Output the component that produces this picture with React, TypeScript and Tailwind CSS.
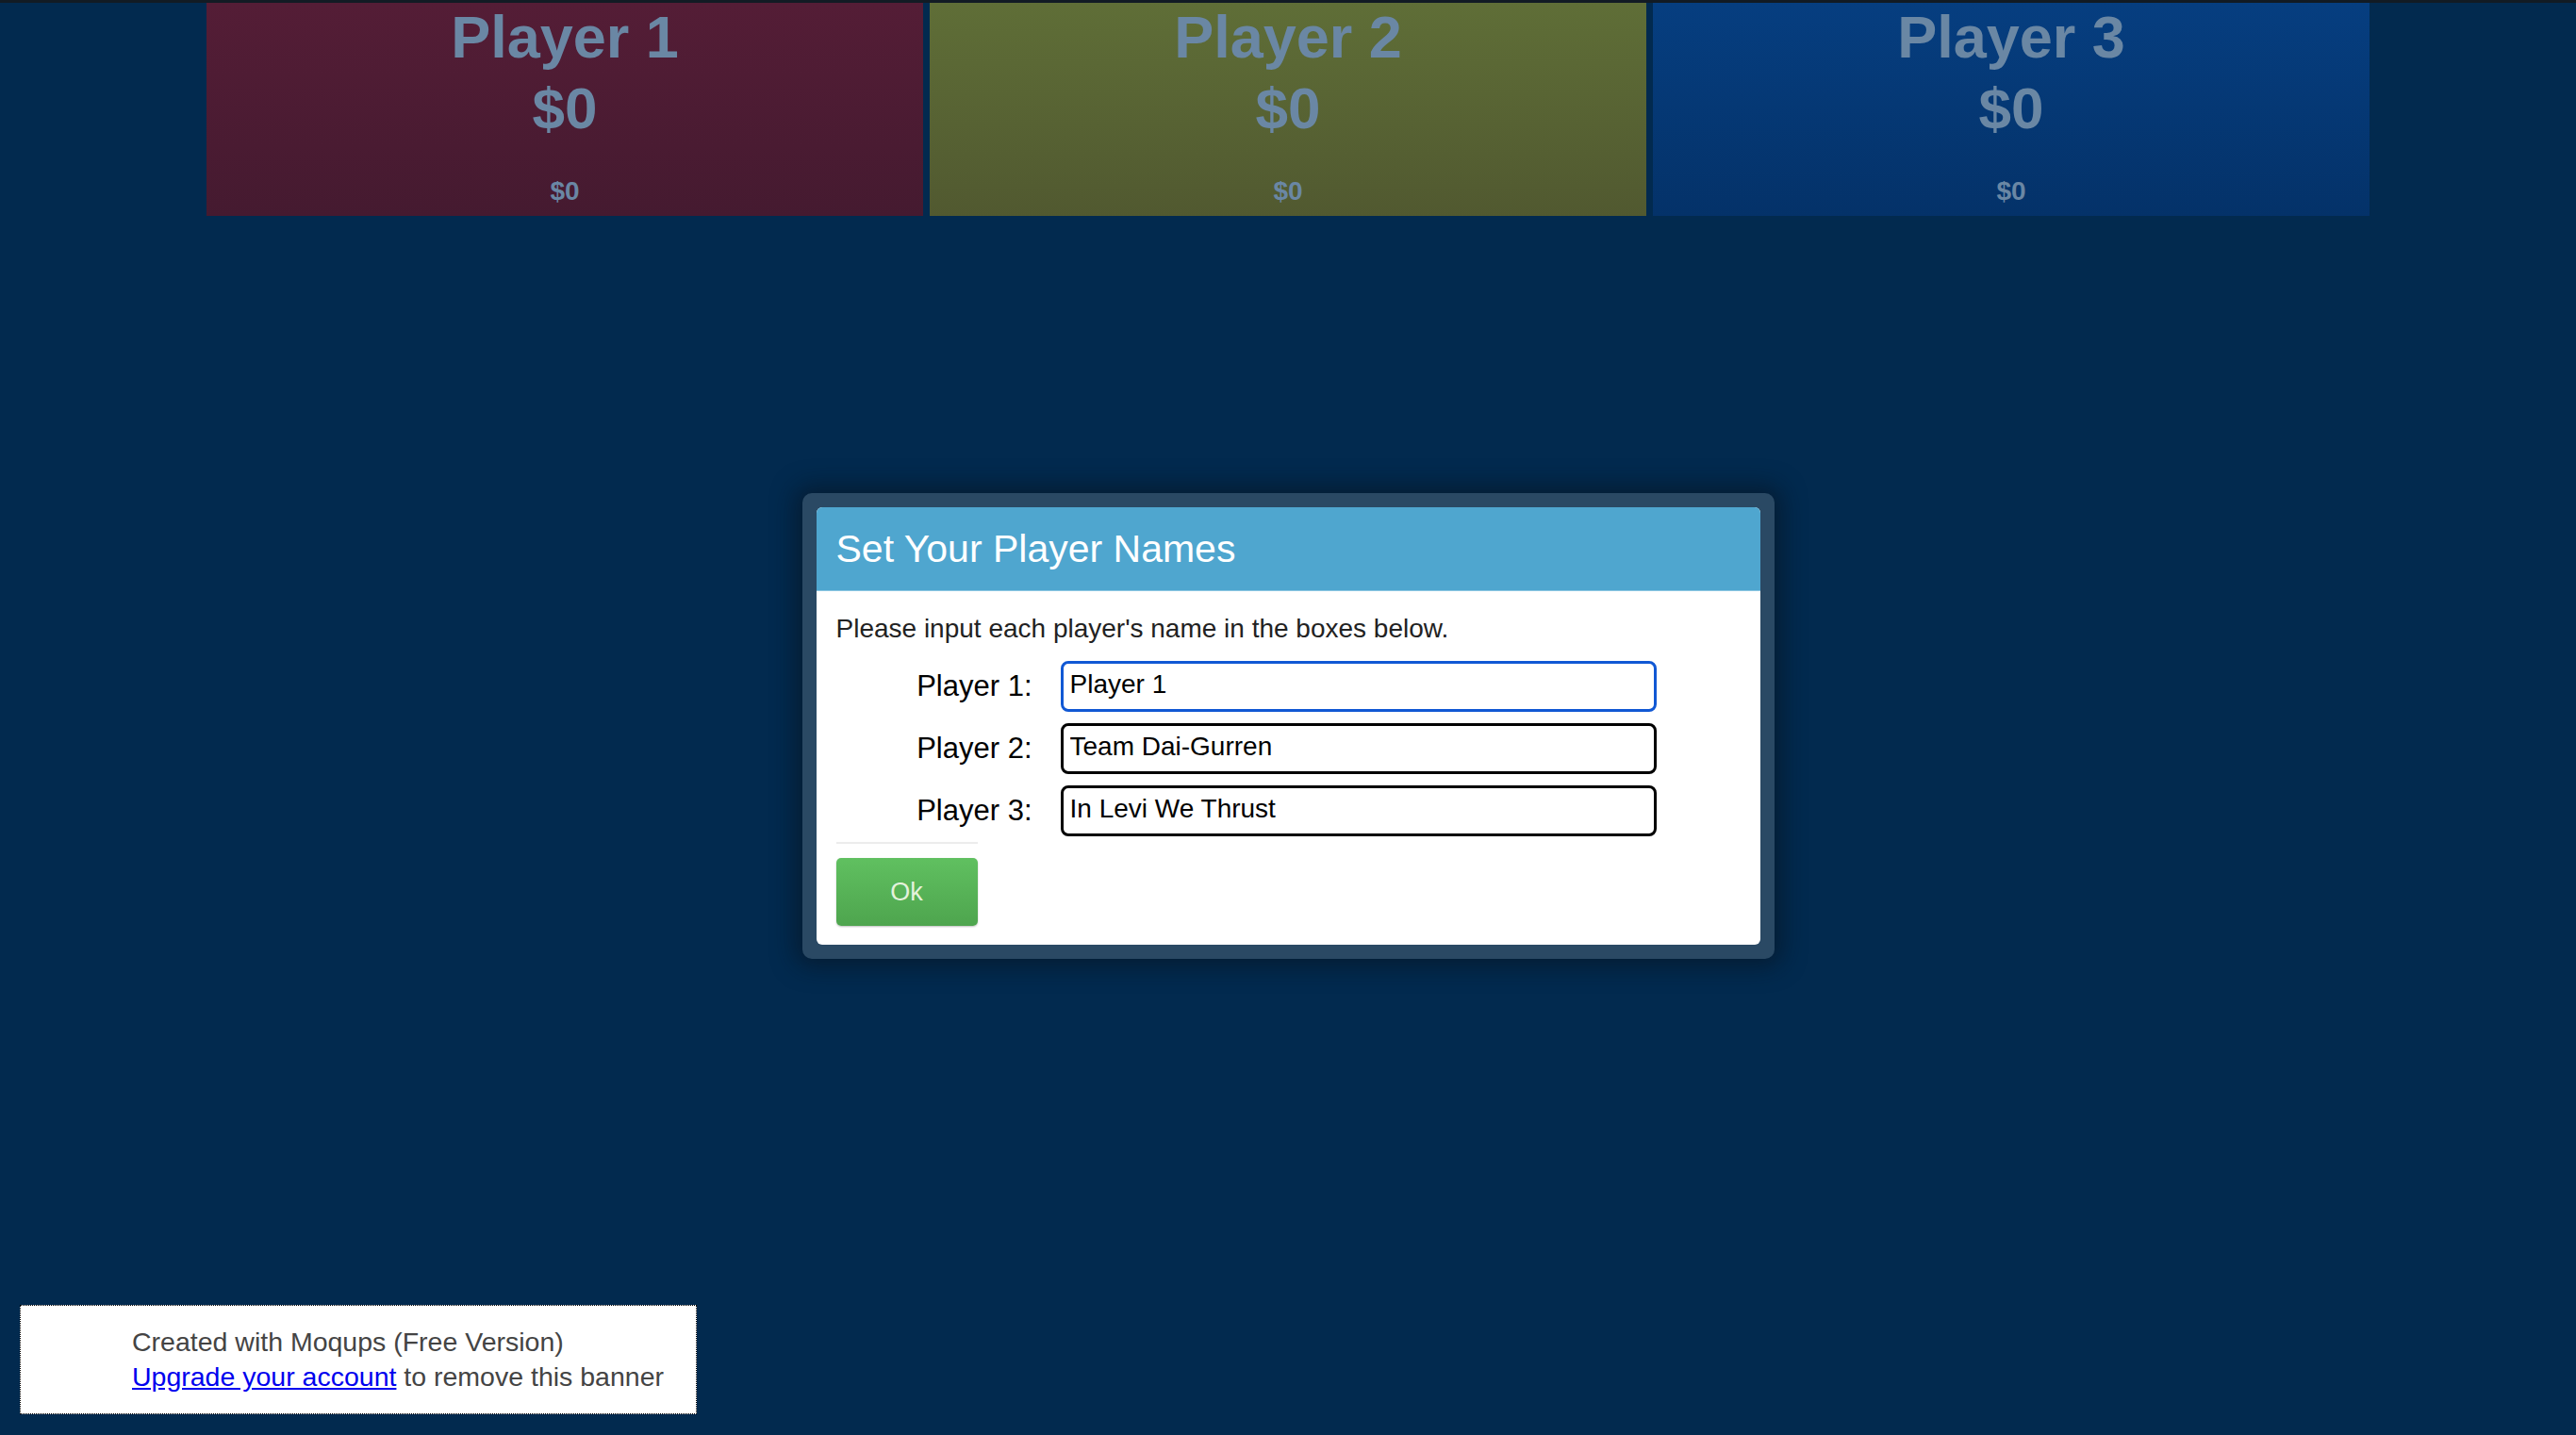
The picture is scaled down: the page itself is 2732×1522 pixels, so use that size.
import React from "react"

const players = [
  { name: "Player 1", bg: "bg-gradient-to-b from-[#541d36] to-[#451a30]" },
  { name: "Player 2", bg: "bg-gradient-to-b from-[#5f6e37] to-[#515930]" },
  { name: "Player 3", bg: "bg-gradient-to-b from-[#063e80] to-[#043269]" },
]

const names = [
  { label: "Player 1:", value: "Player 1", focus: true },
  { label: "Player 2:", value: "Team Dai-Gurren", focus: false },
  { label: "Player 3:", value: "In Levi We Thrust", focus: false },
]

const ScoreCard = ({ name, bg }: { name: string; bg: string }) => {
  return <div className={`w-[760px] h-[226px] flex flex-col items-center ${bg} text-[#6a87a4] font-bold`}>
    <div className="text-[63px] leading-[72px]">{name}</div>
    <div className="mt-[2px] text-[62px] leading-[75px]">$0</div>
    <div className="mt-[35px] text-[28px] leading-[32px]">$0</div>
  </div>
}

export default function App() {
  return <div className="min-h-[1522px] bg-[#022a4f] font-['Liberation_Sans',Arial,sans-serif]">
    <div className="h-[3px] bg-[#121b24]"></div>
    <div className="flex justify-center gap-[7px]">
      {players.map(p => <ScoreCard key={p.name} name={p.name} bg={p.bg} />)}
    </div>

    {/* name dialog */}
    <div className="mx-auto mt-[294px] w-[1031px] p-[15px] rounded-[10px] bg-[#2a4964] shadow-[0_0_24px_8px_rgba(8,18,30,0.55)]">
      <div className="bg-white rounded-[6px] overflow-hidden">
        <div className="h-[89px] bg-[#4fa6cf] border-b border-[#8cc6e2] flex items-center px-[21px] pt-[2px]">
          <span className="text-white text-[41px]">Set Your Player Names</span>
        </div>
        <div className="px-[21px] pt-[24px] pb-[20px]">
          <p className="text-[28px] leading-[32px] text-[#222]">Please input each player's name in the boxes below.</p>
          <div className="mt-[18px] flex flex-col gap-[12px]">
            {names.map(n => <div key={n.label} className="flex items-center gap-[30px]">
              <label className="w-[208px] text-right text-[31px] text-black">{n.label}</label>
              <input
                defaultValue={n.value}
                className={`w-[632px] h-[54px] rounded-[8px] border-[3px] ${n.focus ? "border-[#1158d4]" : "border-black"} pl-[7px] pb-[5px] text-[28px] text-black outline-none`}
              />
            </div>)}
          </div>
          <div className="mt-[6px] w-[150px] h-[2px] bg-[#ececec]"></div>
          <button className="mt-[15px] w-[150px] h-[72px] rounded-[5px] bg-gradient-to-b from-[#60c060] to-[#4ea54e] text-[#e4f2dc] text-[27px] shadow-[0_1px_2px_rgba(0,0,0,0.25)]">
            Ok
          </button>
        </div>
      </div>
    </div>

    <div className="fixed left-[21px] bottom-[22px] w-[718px] h-[116px] bg-white border border-dotted border-black pl-[118px] pt-[20px] text-[28.5px] leading-[37px] text-[#444]">
      <div>Created with Moqups (Free Version)</div>
      <div><a href="#" className="text-[#0000ee] underline">Upgrade your account</a> to remove this banner</div>
    </div>
  </div>
}
